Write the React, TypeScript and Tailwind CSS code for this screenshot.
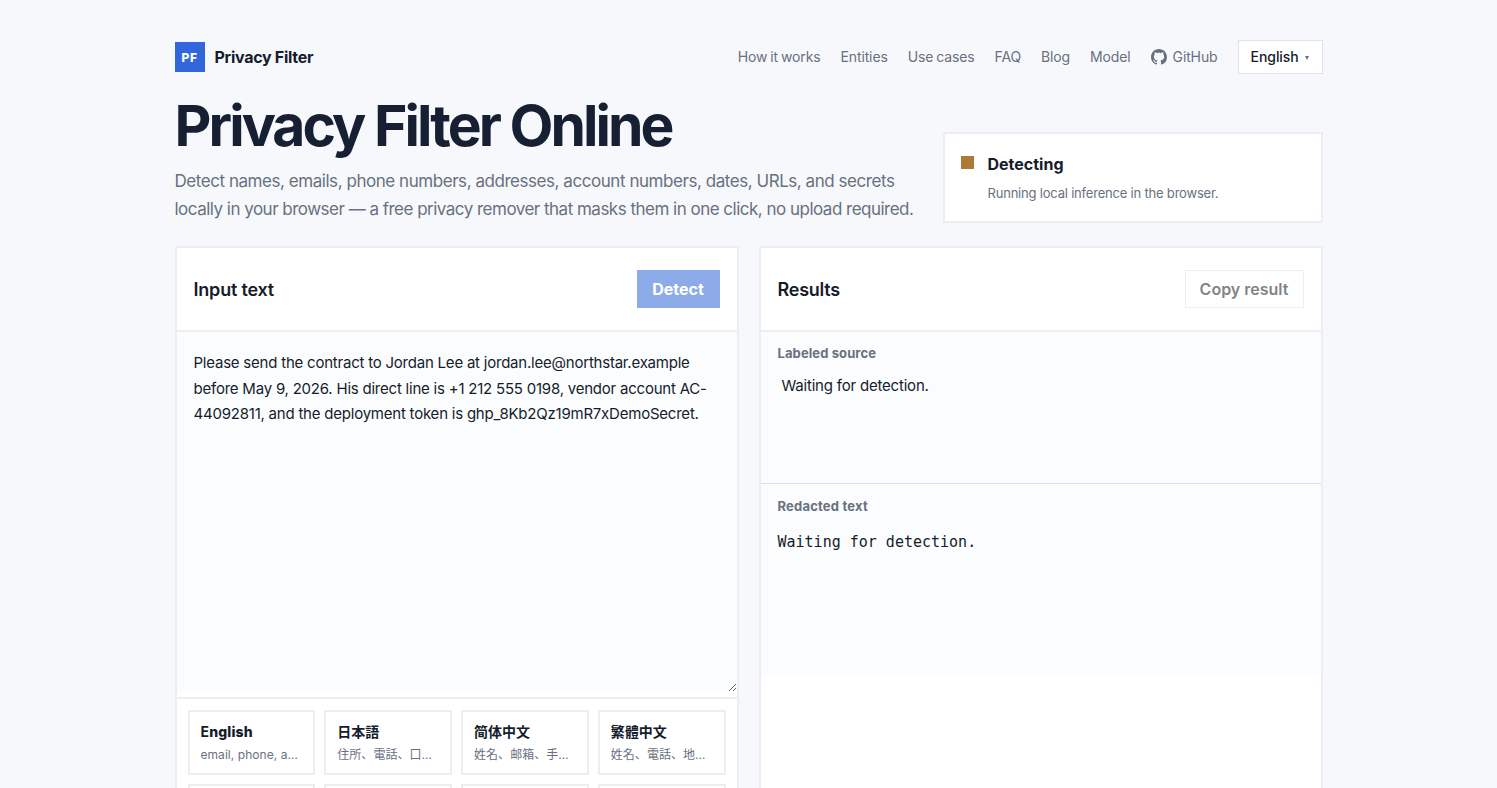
import React from 'react';

interface Sample {
  name: string;
  hint: string;
}

const navLinks = ['How it works', 'Entities', 'Use cases', 'FAQ', 'Blog', 'Model'];

const samples: Sample[] = [
  { name: 'English', hint: 'email, phone, a…' },
  { name: '日本語', hint: '住所、電話、口…' },
  { name: '简体中文', hint: '姓名、邮箱、手…' },
  { name: '繁體中文', hint: '姓名、電話、地…' },
];

const sampleText =
  'Please send the contract to Jordan Lee at jordan.lee@northstar.example before May 9, 2026. His direct line is +1 212 555 0198, vendor account AC-44092811, and the deployment token is ghp_8Kb2Qz19mR7xDemoSecret.';

const GitHubIcon: React.FC = () => (
  <svg viewBox="0 0 16 16" className="w-4 h-4" fill="currentColor" aria-hidden="true">
    <path d="M8 0C3.58 0 0 3.58 0 8c0 3.54 2.29 6.53 5.47 7.59.4.07.55-.17.55-.38 0-.19-.01-.82-.01-1.49-2.01.37-2.53-.49-2.69-.94-.09-.23-.48-.94-.82-1.13-.28-.15-.68-.52-.01-.53.63-.01 1.08.58 1.23.82.72 1.21 1.87.87 2.33.66.07-.52.28-.87.51-1.07-1.78-.2-3.64-.89-3.64-3.95 0-.87.31-1.59.82-2.15-.08-.2-.36-1.02.08-2.12 0 0 .67-.21 2.2.82.64-.18 1.32-.27 2-.27s1.36.09 2 .27c1.53-1.04 2.2-.82 2.2-.82.44 1.1.16 1.92.08 2.12.51.56.82 1.27.82 2.15 0 3.07-1.87 3.75-3.65 3.95.29.25.54.73.54 1.48 0 1.07-.01 1.93-.01 2.2 0 .21.15.46.55.38A8.01 8.01 0 0 0 16 8c0-4.42-3.58-8-8-8Z" />
  </svg>
);

const Header: React.FC = () => (
  <header className="flex h-[34px] items-center justify-between">
    <a className="flex items-center gap-[10px]">
      <span className="flex h-[30px] w-[30px] items-center justify-center bg-[#3267db] pt-0.5 text-xs font-extrabold tracking-[0.5px] text-white">
        PF
      </span>
      <span className="text-base font-bold tracking-[-0.28px]">Privacy Filter</span>
    </a>
    <nav className="flex items-center gap-5 text-sm tracking-[-0.13px] [word-spacing:-0.8px] text-[#68717f]">
      {navLinks.map(label => (
        <a key={label}>{label}</a>
      ))}
      <a className="flex items-center gap-1.5">
        <GitHubIcon />
        GitHub
      </a>
      <button className="flex h-[34px] w-[85px] items-center gap-[6px] border border-[#dfe3e9] bg-white pl-3 font-medium tracking-[-0.05px] text-[#151c2b]">
        English
        <svg viewBox="0 0 4 4" className="mt-px h-1 w-1" fill="#68717f">
          <path d="M0 0h4L2 4Z" />
        </svg>
      </button>
    </nav>
  </header>
);

const Hero: React.FC = () => (
  <section className="mt-[22px] flex items-end justify-between">
    <div className="w-[748px]">
      <h1 className="text-[57px] font-bold leading-[60px] tracking-[-2.95px] text-[#172033]">Privacy Filter Online</h1>
      <p className="mt-[11px] text-[17px] leading-7 tracking-[-0.45px] text-[#68717f]">
        Detect names, emails, phone numbers, addresses, account numbers, dates, URLs, and secrets
        <br />
        <span className="tracking-[-0.51px]">
          locally in your browser — a free privacy remover that masks them in one click, no upload required.
        </span>
      </p>
    </div>
    <div className="flex h-[91px] w-[380px] shrink-0 gap-[14px] border-2 border-[#eceef2] bg-white pl-4 pt-[18px]">
      <span className="mt-[4px] h-[13px] w-[13px] bg-[#ad7a35]" />
      <div>
        <div className="text-base font-bold leading-6">Detecting</div>
        <p className="mt-[7px] text-[13px] leading-5 tracking-[-0.2px] text-[#68717f]">Running local inference in the browser.</p>
      </div>
    </div>
  </section>
);

const InputPanel: React.FC = () => (
  <section className="w-[564px] border-2 border-[#eceef2] bg-white">
    <div className="flex h-[82px] items-center justify-between px-[17px]">
      <h2 className="pt-0.5 text-lg font-semibold tracking-[-0.2px]">Input text</h2>
      <button className="h-[38px] w-[83px] bg-[#8eabe9] text-base font-bold text-white">Detect</button>
    </div>
    <textarea
      className="block h-[362px] w-full resize border-t-2 border-[#eceef2] bg-[#fbfcfe] pl-[17px] pr-3 pt-[18px] text-[15px] leading-[25.5px] tracking-[-0.22px] outline-none"
      defaultValue={sampleText}
      spellCheck={false}
    />
    <div className="mt-[5px] grid grid-cols-4 gap-[9px] border-t-2 border-[#eceef2] px-[11px] pt-[11px]">
      {samples.map(sample => (
        <button key={sample.name} className="h-[65px] min-w-0 border-2 border-[#eceef2] bg-white px-[11px] text-left">
          <div className="text-sm font-bold leading-5 first-letter:font-bold">
            {sample.name === 'English' ? <span className="font-extrabold tracking-[0.15px]">{sample.name}</span> : sample.name}
          </div>
          <div className="mt-1 whitespace-nowrap text-xs leading-[18px] tracking-[0.05px] text-[#68717f]">{sample.hint}</div>
        </button>
      ))}
      {/* tops of the next row, cut by the fold */}
      {samples.map(sample => (
        <div key={sample.name} className="h-[65px] border-2 border-[#eceef2] bg-white" />
      ))}
    </div>
  </section>
);

const ResultsPanel: React.FC = () => (
  <section className="w-[564px] border-2 border-[#eceef2] bg-white">
    <div className="flex h-[82px] items-center justify-between px-[17px]">
      <h2 className="pt-0.5 text-lg font-semibold tracking-[-0.25px]">Results</h2>
      <button className="h-[38px] w-[119px] border border-[#eceef2] bg-white text-base font-semibold text-[#828488]">
        Copy result
      </button>
    </div>
    <div className="h-[153px] border-t-2 border-[#eceef2] bg-[#fbfcfe] px-[17px] pt-[11px]">
      <h3 className="text-[13px] font-bold leading-5 tracking-[0.1px] text-[#68717f]">Labeled source</h3>
      <p className="mt-[10px] pl-1 text-[15px] leading-[25.5px] tracking-[-0.2px]">Waiting for detection.</p>
    </div>
    <div className="h-[193px] border-t border-[#d9dfe9] bg-[#fbfcfe] px-[17px] pt-3">
      <h3 className="text-[13px] font-bold leading-5 tracking-[0.2px] text-[#68717f]">Redacted text</h3>
      <pre className="mt-[14px] font-['DejaVu_Sans_Mono',monospace] text-[15px] leading-[25.5px]">Waiting for detection.</pre>
    </div>
  </section>
);

const App: React.FC = () => {
  return (
    <div className="h-screen overflow-hidden bg-[#f6f8fc] pt-10 font-['Inter','Noto_Sans_CJK_JP','Noto_Sans_CJK_SC',sans-serif] text-[#151c2b]">
      <main className="mx-auto w-[1148px]">
        <Header />
        <Hero />
        <div className="mt-[23px] flex h-[700px] justify-between">
          <InputPanel />
          <ResultsPanel />
        </div>
      </main>
    </div>
  );
};

export default App;
